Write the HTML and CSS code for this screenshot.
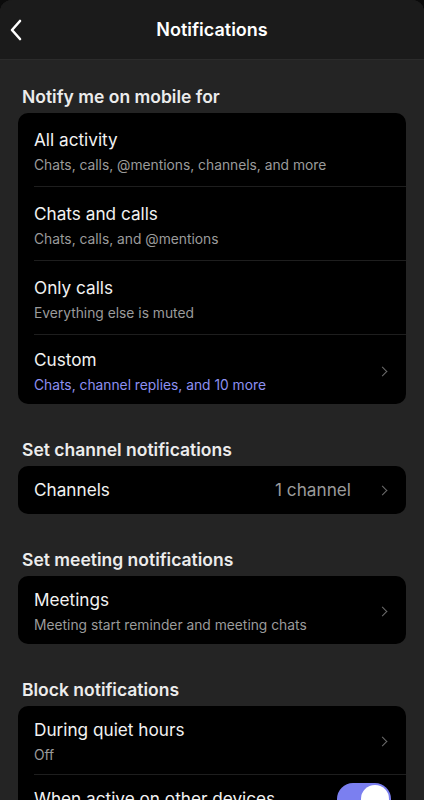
FILE: index.html
```html
<!DOCTYPE html>
<html lang="en">

<head>
    <meta charset="UTF-8">
    <meta name="viewport" content="width=device-width, initial-scale=1.0">
    <title>Notifications</title>
    <link rel="stylesheet" href="styles.css">
</head>

<body>
    <div class="sheet">
        <header class="topbar">
            <svg class="back" width="16" height="24" viewBox="0 0 16 24">
                <path d="M12 3 L4 12 L12 21" fill="none" stroke="#ffffff" stroke-width="2.6" stroke-linecap="round" stroke-linejoin="round" />
            </svg>
            <h1>Notifications</h1>
        </header>

        <main class="content">
            <section class="group">
                <h2>Notify me on mobile for</h2>
                <div class="card">
                    <div class="row choice">
                        <div class="text">
                            <div class="title">All activity</div>
                            <div class="sub">Chats, calls, @mentions, channels, and more</div>
                        </div>
                    </div>
                    <div class="row choice">
                        <div class="text">
                            <div class="title">Chats and calls</div>
                            <div class="sub">Chats, calls, and @mentions</div>
                        </div>
                    </div>
                    <div class="row choice">
                        <div class="text">
                            <div class="title">Only calls</div>
                            <div class="sub">Everything else is muted</div>
                        </div>
                    </div>
                    <div class="row choice">
                        <div class="text">
                            <div class="title">Custom</div>
                            <div class="sub accent">Chats, channel replies, and 10 more</div>
                        </div>
                        <span class="chev"></span>
                    </div>
                </div>
            </section>

            <section class="group">
                <h2>Set channel notifications</h2>
                <div class="card">
                    <div class="row single">
                        <div class="title">Channels</div>
                        <div class="value">1 channel</div>
                        <span class="chev"></span>
                    </div>
                </div>
            </section>

            <section class="group">
                <h2>Set meeting notifications</h2>
                <div class="card">
                    <div class="row">
                        <div class="text">
                            <div class="title">Meetings</div>
                            <div class="sub">Meeting start reminder and meeting chats</div>
                        </div>
                        <span class="chev"></span>
                    </div>
                </div>
            </section>

            <section class="group">
                <h2>Block notifications</h2>
                <div class="card">
                    <div class="row">
                        <div class="text">
                            <div class="title">During quiet hours</div>
                            <div class="sub">Off</div>
                        </div>
                        <span class="chev"></span>
                    </div>
                    <div class="row switch">
                        <div class="title">When active on other devices</div>
                        <span class="toggle on"><span class="knob"></span></span>
                    </div>
                </div>
            </section>
        </main>
    </div>
</body>

</html>
```
FILE: styles.css
```css
html,
body {
    margin: 0;
    padding: 0;
    background-color: #0b0b0b;
    height: 100%;
    overflow: hidden;
}

body {
    font-family: Inter, "Noto Sans", sans-serif;
    color: #f2f2f2;
}

.sheet {
    background-color: #242424;
    border-radius: 12px 12px 0 0;
    min-height: 100%;
    overflow: hidden;
}

.topbar {
    height: 60px;
    background-color: #1b1b1b;
    border-bottom: 1px solid #2c2c2c;
    box-sizing: border-box;
    display: flex;
    align-items: center;
    justify-content: center;
    position: relative;
}

.topbar h1 {
    margin: 0;
    font-size: 18px;
    font-weight: 600;
    color: #ffffff;
}

.back {
    position: absolute;
    left: 8px;
    top: 18px;
}

.content {
    padding: 26px 18px 0;
}

.group {
    margin-bottom: 35px;
}

.group h2 {
    margin: 0 0 5px 4px;
    font-size: 17.5px;
    line-height: 22px;
    font-weight: 600;
    color: #ececec;
}

.card {
    background-color: #000000;
    border-radius: 10px;
    padding-left: 16px;
}

.row {
    display: flex;
    align-items: center;
    padding: 13px 0 10px;
    border-bottom: 1px solid #1e1e1e;
}

.row:last-child {
    border-bottom: none;
}

.row.choice {
    padding: 16px 0 12px;
}

.row.choice:last-child {
    padding: 14px 0 10px;
}

.row.single {
    padding: 13px 0;
}

.row.switch {
    padding: 8px 0;
}

.text {
    flex: 1;
}

.title {
    font-size: 17.2px;
    line-height: 22px;
    color: #f2f2f2;
}

.row.single .title,
.row.switch .title {
    flex: 1;
}

.sub {
    margin-top: 5px;
    font-size: 13.8px;
    line-height: 18px;
    color: #9b9b9b;
}

.sub.accent {
    color: #8d90f2;
}

.value {
    font-size: 17.2px;
    line-height: 22px;
    color: #9a9a9a;
    margin-right: 28px;
}

.chev {
    width: 6px;
    height: 6px;
    border-top: 1.5px solid #6c6c6c;
    border-right: 1.5px solid #6c6c6c;
    transform: rotate(45deg);
    margin-right: 20px;
}

.toggle {
    width: 54px;
    height: 32px;
    border-radius: 16px;
    background-color: #7b7ff0;
    margin-right: 15px;
    display: flex;
    align-items: center;
    justify-content: flex-end;
    padding: 0 2px;
    box-sizing: border-box;
}

.knob {
    width: 28px;
    height: 28px;
    border-radius: 50%;
    background-color: #ffffff;
}
```
